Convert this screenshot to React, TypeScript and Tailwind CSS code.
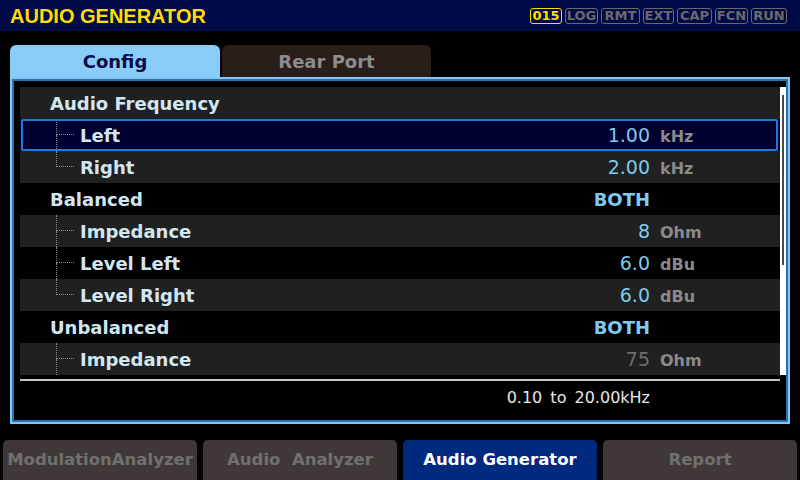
import React from 'react';

type Row = {
  label: string;
  level: 0 | 1;
  value?: string;
  unit?: string;
  last?: boolean;
  dim?: boolean;
  selected?: boolean;
};

const ROWS: Row[] = [
  { label: 'Audio Frequency', level: 0 },
  { label: 'Left', level: 1, value: '1.00', unit: 'kHz', selected: true },
  { label: 'Right', level: 1, value: '2.00', unit: 'kHz', last: true },
  { label: 'Balanced', level: 0, value: 'BOTH' },
  { label: 'Impedance', level: 1, value: '8', unit: 'Ohm' },
  { label: 'Level Left', level: 1, value: '6.0', unit: 'dBu' },
  { label: 'Level Right', level: 1, value: '6.0', unit: 'dBu', last: true },
  { label: 'Unbalanced', level: 0, value: 'BOTH' },
  { label: 'Impedance', level: 1, value: '75', unit: 'Ohm', dim: true },
];

const BADGES = [
  { t: 'LOG', w: 'w-[33px]' },
  { t: 'RMT', w: 'w-[39px]' },
  { t: 'EXT', w: 'w-[31px]' },
  { t: 'CAP', w: 'w-[35px]' },
  { t: 'FCN', w: 'w-[33px]' },
  { t: 'RUN', w: 'w-[36px]' },
];

const BUTTONS = [
  { label: 'ModulationAnalyzer', active: false },
  { label: 'Audio  Analyzer', active: false },
  { label: 'Audio Generator', active: true },
  { label: 'Report', active: false },
];

function Connector({ last }: { last?: boolean }) {
  return (
    <div className="ml-[36px] w-[18px] h-full flex flex-col">
      <div className="h-1/2 border-l border-b border-dotted border-[#8a8a8a]" />
      <div className={`h-1/2 ${last ? '' : 'border-l border-dotted border-[#8a8a8a]'}`} />
    </div>
  );
}

function ListRow({ row, index }: { row: Row; index: number }) {
  const bg = row.selected ? 'bg-[#000030]' : index % 2 === 0 ? 'bg-[#202020]' : 'bg-black';
  return (
    <div className={`relative h-[32px] flex items-center ${bg}`}>
      {row.selected && (
        <div className="absolute inset-y-0 left-[1px] right-[2px] border-2 border-[#1f7ae0] rounded-[2px]" />
      )}
      {row.level === 0 ? (
        <span className="pl-[30px] flex-1 text-[18px] font-bold text-[#d2e6f2]">{row.label}</span>
      ) : (
        <>
          <Connector last={row.last} />
          <span className="pl-[6px] flex-1 text-[18px] font-bold text-[#d2e6f2]">{row.label}</span>
        </>
      )}
      <div className="flex items-baseline">
        <span
          className={`text-right ${row.dim ? 'text-[#6e6e6e]' : 'text-[#7ccaf0]'} ${
            row.value === 'BOTH' ? 'text-[18px] font-bold' : 'text-[19px]'
          }`}
        >
          {row.value}
        </span>
        <span className="ml-[10px] w-[120px] text-[16px] font-bold text-[#8a8a8a]">{row.unit}</span>
      </div>
    </div>
  );
}

export default function App() {
  return (
    <div
      className="w-[800px] h-[480px] bg-black flex flex-col overflow-hidden"
      style={{ fontFamily: '"DejaVu Sans", Verdana, sans-serif' }}
    >
      {/* Header */}
      <header className="shrink-0 h-[31px] bg-[#000a46] flex items-center justify-between pl-[10px] pr-[13px]">
        <h1
          className="text-[20px] font-bold text-[#ffdd00]"
          style={{ fontFamily: '"Liberation Sans", Arial, sans-serif' }}
        >
          AUDIO GENERATOR
        </h1>
        <div className="flex items-center gap-[3px]">
          <span className="w-[32px] h-[16px] flex items-center justify-center border border-[#ffdd00] rounded-[3px] text-[13px] font-bold text-[#ffdd00] leading-none">
            015
          </span>
          {BADGES.map(b => (
            <span
              key={b.t}
              className={`${b.w} h-[16px] flex items-center justify-center border border-[#6a6a6a] rounded-[3px] text-[13px] font-bold text-[#6a6a6a] leading-none`}
            >
              {b.t}
            </span>
          ))}
        </div>
      </header>

      {/* Tabs */}
      <div className="shrink-0 mt-[14px] ml-[10px] flex gap-[2px] h-[32px]">
        <div className="w-[210px] rounded-t-[6px] bg-[#88cdf8] flex items-center justify-center text-[18px] font-bold text-[#0c0c48]">
          Config
        </div>
        <div className="w-[209px] rounded-t-[6px] bg-[#2a1e1b] flex items-center justify-center text-[18px] font-bold text-[#8c8c8c]">
          Rear Port
        </div>
      </div>

      {/* Panel */}
      <div className="shrink-0 mx-[10px] h-[347px] border-2 border-[#80c8f2] shadow-[inset_0_0_0_2px_#2a72b4] p-[2px]">
        <div className="h-full pt-[6px] pl-[6px]">
          <div className="flex">
            <div className="w-[760px]">
              {ROWS.map((r, i) => (
                <ListRow key={i} row={r} index={i} />
              ))}
            </div>
            <div className="w-[6px] h-[288px] bg-white pt-[8px] pl-[2px] pr-[2px]">
              <div className="h-[170px] bg-[#4a4a4a]" />
            </div>
          </div>
          <div className="mt-[4px] w-[760px] h-[2px] bg-[#c4c4c4]" />
          <div className="w-[760px] flex">
            <span className="w-[630px] text-right text-[16px] text-[#e8e8e8] pt-[5px] [word-spacing:3px]">
              0.10 to 20.00kHz
            </span>
          </div>
        </div>
      </div>

      {/* Bottom buttons */}
      <nav className="shrink-0 mt-[16px] px-[3px] flex gap-[6px]">
        {BUTTONS.map(b => (
          <button
            key={b.label}
            className={`w-[194px] h-[44px] pb-[4px] rounded-[5px] text-[16.5px] font-bold whitespace-pre ${
              b.active ? 'bg-[#002a80] text-white' : 'bg-[#403838] text-[#707070]'
            }`}
          >
            {b.label}
          </button>
        ))}
      </nav>
    </div>
  );
}
